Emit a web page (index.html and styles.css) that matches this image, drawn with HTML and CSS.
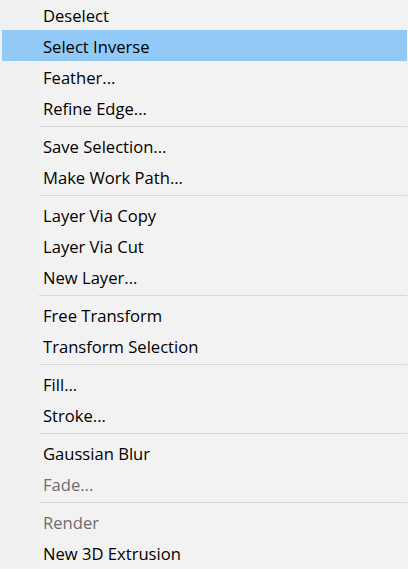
FILE: index.html
```html
<!DOCTYPE html>
<html>
<head>
<meta charset="utf-8">
<link rel="stylesheet" href="styles.css">
</head>
<body>
<div class="menu">
  <div class="item">Deselect</div>
  <div class="item active">Select Inverse</div>
  <div class="item">Feather...</div>
  <div class="item">Refine Edge...</div>
  <div class="sep"></div>
  <div class="item">Save Selection...</div>
  <div class="item">Make Work Path...</div>
  <div class="sep"></div>
  <div class="item">Layer Via Copy</div>
  <div class="item">Layer Via Cut</div>
  <div class="item">New Layer...</div>
  <div class="sep"></div>
  <div class="item">Free Transform</div>
  <div class="item">Transform Selection</div>
  <div class="sep"></div>
  <div class="item">Fill...</div>
  <div class="item">Stroke...</div>
  <div class="sep"></div>
  <div class="item">Gaussian Blur</div>
  <div class="item disabled">Fade...</div>
  <div class="sep"></div>
  <div class="item disabled">Render</div>
  <div class="item">New 3D Extrusion</div>
</div>
</body>
</html>
```
FILE: styles.css
```css
html, body {
  margin: 0;
  padding: 0;
  background: #f2f2f2;
  overflow: hidden;
}
.menu {
  width: 408px;
  height: 569px;
  margin-top: -1px;
  background: linear-gradient(to right, #f0f0f0 0, #f0f0f0 39px, #f2f2f2 39px);
  font-family: "Open Sans", "Liberation Sans", sans-serif;
  font-size: 16.6px;
  color: #000;
}
.item {
  height: 31px;
  line-height: 33px;
  padding-left: 43px;
  white-space: nowrap;
}
.item.active {
  background: #91c9f7;
  margin: 0 1px 0 2px;
  padding-left: 41px;
}
.item.disabled {
  color: #6d6d6d;
}
.sep {
  height: 7px;
  margin-left: 39px;
  margin-right: 1px;
  display: flex;
  align-items: center;
}
.sep::before {
  content: "";
  display: block;
  flex: 1;
  height: 1px;
  background: #d7d7d7;
}
```
